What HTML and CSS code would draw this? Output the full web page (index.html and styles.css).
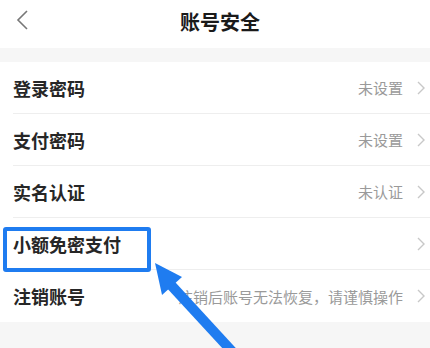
FILE: index.html
```html
<!DOCTYPE html>
<html lang="zh-CN">
<head>
<meta charset="utf-8">
<link rel="stylesheet" href="styles.css">
</head>
<body>
<div class="page">
  <header class="nav">
    <svg class="back" width="14" height="22" viewBox="0 0 14 22"><path d="M11 2 L2 11 L11 20" fill="none" stroke="#777" stroke-width="1.6"/></svg>
    <h1 class="title">账号安全</h1>
  </header>
  <div class="gap"></div>
  <ul class="list">
    <li class="row"><span class="label">登录密码</span><span class="value">未设置</span><svg class="chev" width="8" height="14" viewBox="0 0 8 14"><path d="M1 1 L7 7 L1 13" fill="none" stroke="#c8c8c8" stroke-width="1.4"/></svg></li>
    <li class="row"><span class="label">支付密码</span><span class="value">未设置</span><svg class="chev" width="8" height="14" viewBox="0 0 8 14"><path d="M1 1 L7 7 L1 13" fill="none" stroke="#c8c8c8" stroke-width="1.4"/></svg></li>
    <li class="row"><span class="label">实名认证</span><span class="value">未认证</span><svg class="chev" width="8" height="14" viewBox="0 0 8 14"><path d="M1 1 L7 7 L1 13" fill="none" stroke="#c8c8c8" stroke-width="1.4"/></svg></li>
    <li class="row"><span class="label">小额免密支付</span><span class="value"></span><svg class="chev" width="8" height="14" viewBox="0 0 8 14"><path d="M1 1 L7 7 L1 13" fill="none" stroke="#c8c8c8" stroke-width="1.4"/></svg><span class="box"></span></li>
    <li class="row last"><span class="label">注销账号</span><span class="value">注销后账号无法恢复，请谨慎操作</span><svg class="chev" width="8" height="14" viewBox="0 0 8 14"><path d="M1 1 L7 7 L1 13" fill="none" stroke="#c8c8c8" stroke-width="1.4"/></svg></li>
  </ul>
  <div class="footer"></div>
  <svg class="arrow" width="430" height="348" viewBox="0 0 430 348">
    <line x1="170" y1="284" x2="240" y2="360" stroke="#1f7cf0" stroke-width="10"/>
    <polygon points="155,263 182,277 162,295" fill="#1f7cf0"/>
  </svg>
</div>
</body>
</html>
```
FILE: styles.css
```css
* { box-sizing: border-box; }
html, body { margin: 0; padding: 0; }
body {
  width: 430px;
  height: 348px;
  overflow: hidden;
  background: #fff;
  font-family: "Noto Sans CJK SC", "Noto Sans", sans-serif;
  color: #222;
}
.page { position: relative; width: 430px; height: 348px; overflow: hidden; }
.nav {
  height: 48px;
  display: flex;
  align-items: center;
  justify-content: center;
  position: relative;
  background: #fff;
}
.back { position: absolute; left: 16px; top: 9px; }
.title {
  margin: 0 0 6px 10px;
  font-size: 20px;
  font-weight: 700;
  color: #1a1a1a;
}
.gap { height: 14px; background: #f6f6f6; }
.list { list-style: none; margin: 0; padding: 0 0 0 13px; background: #fff; }
.row {
  position: relative;
  height: 52px;
  display: flex;
  align-items: center;
  border-bottom: 1px solid #eeeeee;
  padding-right: 5px;
}
.row.last { border-bottom: none; }
.label {
  font-size: 18px;
  font-weight: 700;
  color: #262626;
  flex: 1;
}
.value {
  font-size: 15px;
  color: #9a9a9a;
  margin-right: 14px;
}
.chev { display: block; }
.box {
  position: absolute;
  left: -10px;
  top: 9px;
  width: 148px;
  height: 45px;
  border: 4px solid #1f7cf0;
  border-radius: 3px;
}
.footer { height: 30px; background: #f6f6f6; }
.arrow { position: absolute; left: 0; top: 0; pointer-events: none; }
```
